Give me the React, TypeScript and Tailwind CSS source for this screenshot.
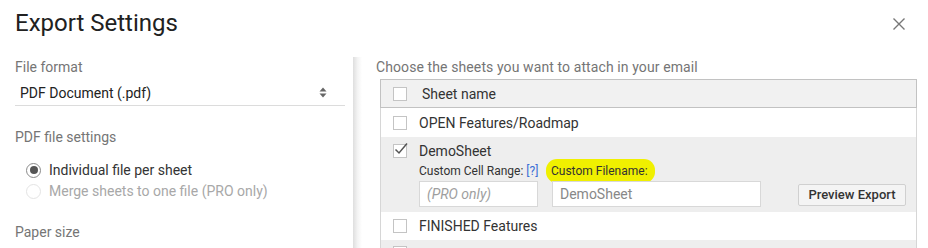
import React from "react";

function Checkbox({ checked = false }: { checked?: boolean }) {
  return (
    <span className="relative inline-block w-[14px] h-[14px] shrink-0 border border-[#c4c4c4] bg-white">
      {checked && (
        <svg className="absolute -left-[1px] -top-[4px]" width="16" height="16" viewBox="0 0 16 16">
          <path d="M2.5 8.5 L6 12 L14 2.5" fill="none" stroke="#555" strokeWidth="1.5" />
        </svg>
      )}
    </span>
  );
}

function Radio({ on, disabled }: { on?: boolean; disabled?: boolean }) {
  return (
    <span
      className={
        disabled
          ? "ml-[11px] w-[15px] h-[15px] rounded-full border border-[#e4e4e4] flex items-center justify-center"
          : "ml-[11px] w-[15px] h-[15px] rounded-full border border-[#8a8a8a] flex items-center justify-center"
      }
    >
      {on && <span className="w-[8px] h-[8px] rounded-full bg-[#555]" />}
    </span>
  );
}

export default function App() {
  return (
    <div className="w-[928px] h-[248px] overflow-hidden bg-white font-['Roboto',sans-serif] text-[#333]">
      <div className="h-[57px] flex items-start justify-between pl-[15px] pr-[23px]">
        <h1 className="pt-[9px] text-[24px] leading-[28px] text-[#212121]">Export Settings</h1>
        <button type="button" className="mt-[18px] w-[12px] h-[12px]">
          <svg width="12" height="12" viewBox="0 0 12 12">
            <path d="M0.5 0.5 L11.5 11.5 M11.5 0.5 L0.5 11.5" stroke="#777" strokeWidth="1.4" />
          </svg>
        </button>
      </div>

      <div className="flex">
        {/* left panel */}
        <div className="w-[353px] pl-[15px] pr-[8px] text-[14px] leading-[20px]">
          <div className="text-[#757575]">File format</div>
          <div className="mt-[3px] h-[26px] pl-[5px] pr-[18px] flex items-center justify-between border-b border-[#dcdcdc] text-[#222]">
            <span>PDF Document (.pdf)</span>
            <svg width="8" height="11" viewBox="0 0 8 11">
              <path d="M4 0.5 L7.5 4.5 L0.5 4.5 Z M0.5 6.5 L7.5 6.5 L4 10.5 Z" fill="#666" />
            </svg>
          </div>
          <div className="mt-[21px] text-[#757575]">PDF file settings</div>
          <div className="mt-[13px] flex items-center gap-[8px] text-[#333]">
            <Radio on />
            <span>Individual file per sheet</span>
          </div>
          <div className="mt-[1px] flex items-center gap-[8px] text-[#a8a8a8]">
            <Radio disabled />
            <span>Merge sheets to one file (PRO only)</span>
          </div>
          <div className="mt-[21px] text-[#757575]">Paper size</div>
        </div>

        {/* divider shadow */}
        <div className="w-[9px] h-[200px] bg-gradient-to-r from-[#dedede] via-[#f3f3f3] to-white" />

        {/* right panel */}
        <div className="flex-1 pl-[14px] pr-[11px] text-[14px] leading-[20px]">
          <div className="text-[#757575] tracking-[0.1px]">Choose the sheets you want to attach in your email</div>
          <div className="mt-[2px] ml-[4px] border-x border-[#d6d6d6]">
            <div className="h-[29px] flex items-center gap-[15px] pl-[12px] bg-[#f1f1f1] border border-[#c2c2c2] -mx-[1px]">
              <Checkbox />
              <span className="text-[#333]">Sheet name</span>
            </div>
            <div className="h-[29px] flex items-center gap-[12px] pl-[12px] bg-white">
              <Checkbox />
              <span>OPEN Features/Roadmap</span>
            </div>
            <div className="h-[75px] bg-[#eeeeee] pl-[12px] pr-[10px] pt-[4px]">
              <div className="flex items-center gap-[12px] h-[20px]">
                <Checkbox checked />
                <span>DemoSheet</span>
              </div>
              <div className="pl-[26px] flex items-end">
                <div>
                  <div className="flex gap-[14px] text-[12px] leading-[16px] mt-[2px]">
                    <span className="w-[118px] whitespace-nowrap">
                      Custom Cell Range: <span className="text-[#3b6fd6]">[?]</span>
                    </span>
                    <span className="-ml-[1px] pl-[1px] pr-[3px] rounded-[7px] bg-[#f0f000] text-[#333] shadow-[0_0_0_4px_#f0f000]">
                      Custom Filename:
                    </span>
                  </div>
                  <div className="flex gap-[14px] mt-[2px]">
                    <div className="w-[119px] h-[26px] border border-[#d8d8d8] bg-white px-[7px] flex items-center italic text-[#9e9e9e]">
                      (PRO only)
                    </div>
                    <div className="w-[209px] h-[26px] border border-[#d8d8d8] bg-white px-[7px] flex items-center text-[#888]">
                      DemoSheet
                    </div>
                  </div>
                </div>
                <button
                  type="button"
                  className="ml-auto mb-[1px] w-[108px] h-[22px] rounded-[2px] border border-[#d0d0d0] bg-[#f4f4f4] text-[13px] font-medium text-[#333]"
                >
                  Preview Export
                </button>
              </div>
            </div>
            <div className="h-[28px] flex items-center gap-[12px] pl-[12px] bg-white">
              <Checkbox />
              <span>FINISHED Features</span>
            </div>
            <div className="h-[28px] flex items-start gap-[12px] pl-[12px] pt-[6px] bg-[#eeeeee]">
              <Checkbox />
            </div>
          </div>
        </div>
      </div>
    </div>
  );
}
